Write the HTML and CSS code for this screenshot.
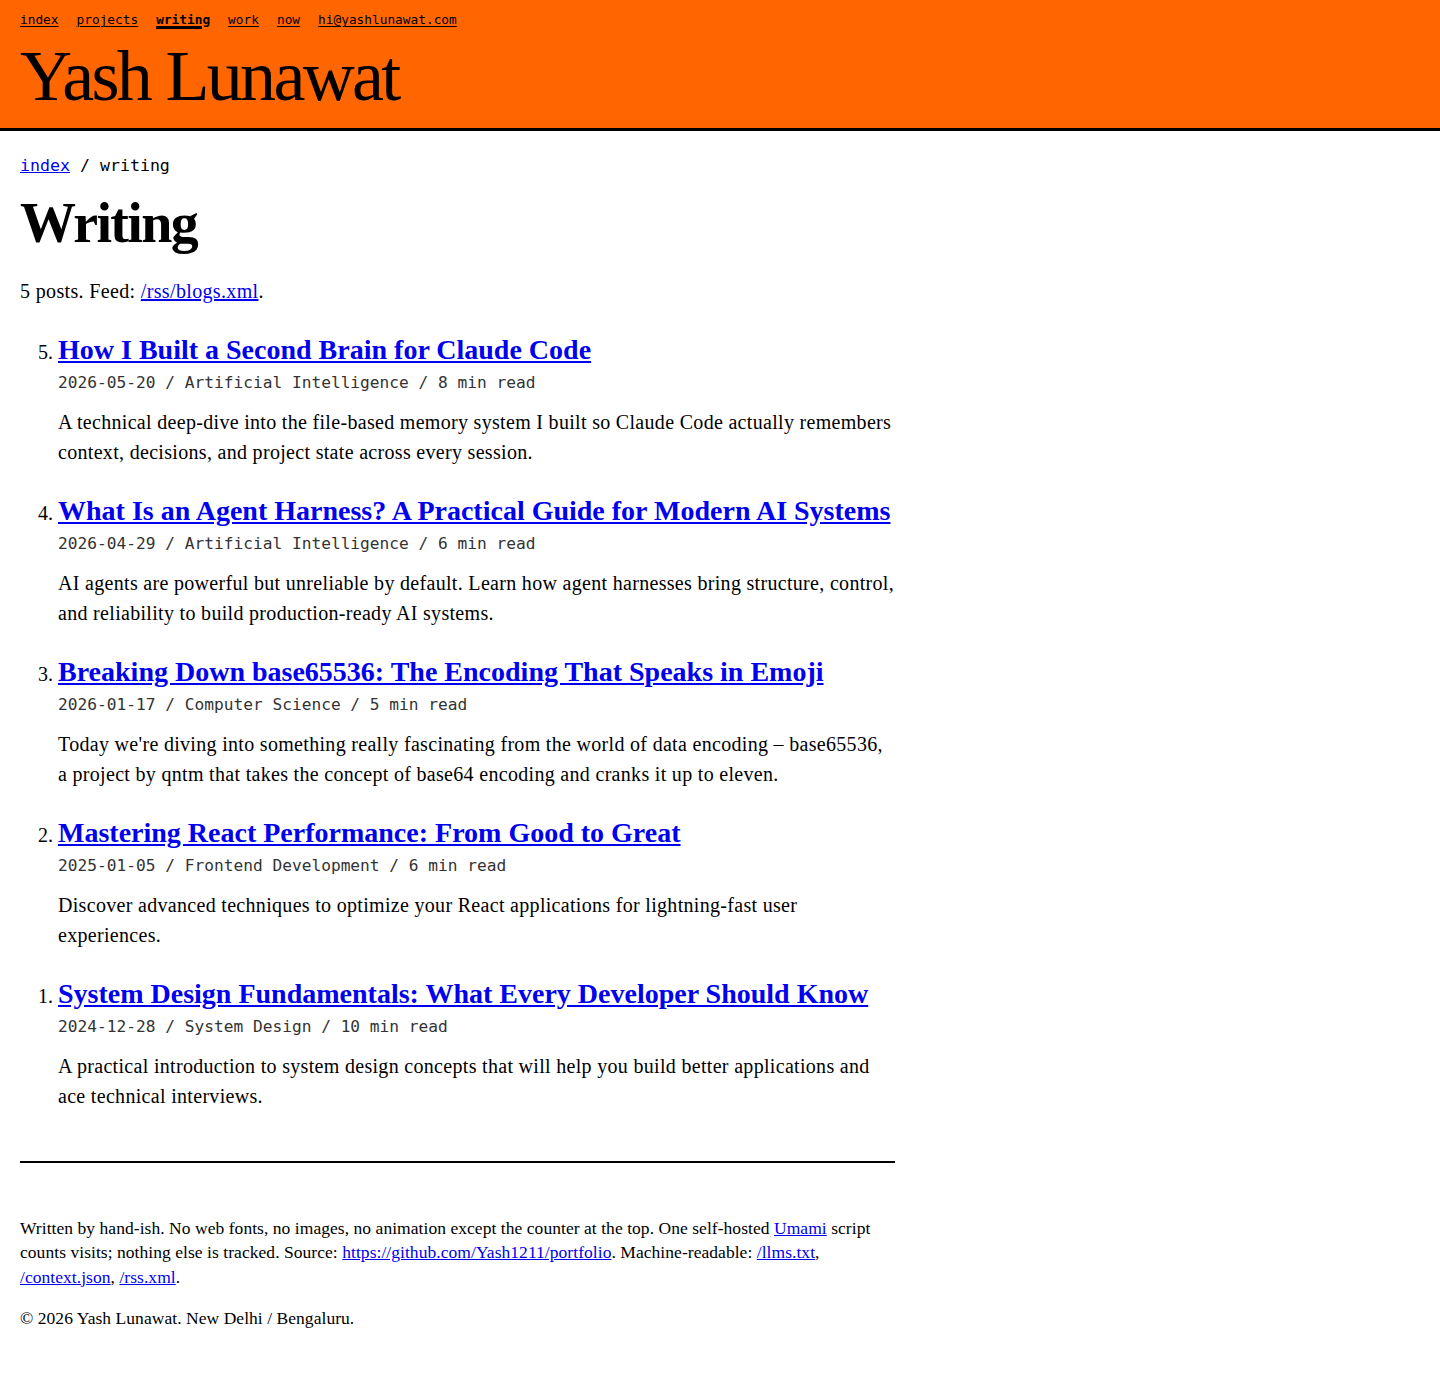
FILE: index.html
```html
<!DOCTYPE html>
<html lang="en">
<head>
<meta charset="utf-8">
<title>Writing — Yash Lunawat</title>
<link rel="stylesheet" href="styles.css">
</head>
<body>
<header class="site-header">
  <nav class="top-nav">
    <a href="#">index</a>
    <a href="#">projects</a>
    <a href="#" class="active">writing</a>
    <a href="#">work</a>
    <a href="#">now</a>
    <a href="#">hi@yashlunawat.com</a>
  </nav>
  <div class="site-name">Yash Lunawat</div>
</header>
<main class="content">
  <div class="crumbs"><a href="#">index</a> / writing</div>
  <h1 class="page-title">Writing</h1>
  <p class="intro">5 posts. Feed: <a href="#">/rss/blogs.xml</a>.</p>
  <ol class="posts" reversed>
    <li class="post">
      <h2 class="post-title"><a href="#">How I Built a Second Brain for Claude Code</a></h2>
      <div class="post-meta">2026-05-20 / Artificial Intelligence / 8 min read</div>
      <p class="post-desc">A technical deep-dive into the file-based memory system I built so Claude Code actually remembers context, decisions, and project state across every session.</p>
    </li>
    <li class="post">
      <h2 class="post-title"><a href="#">What Is an Agent Harness? A Practical Guide for Modern AI Systems</a></h2>
      <div class="post-meta">2026-04-29 / Artificial Intelligence / 6 min read</div>
      <p class="post-desc">AI agents are powerful but unreliable by default. Learn how agent harnesses bring structure, control, and reliability to build production-ready AI systems.</p>
    </li>
    <li class="post">
      <h2 class="post-title"><a href="#">Breaking Down base65536: The Encoding That Speaks in Emoji</a></h2>
      <div class="post-meta">2026-01-17 / Computer Science / 5 min read</div>
      <p class="post-desc">Today we're diving into something really fascinating from the world of data encoding – base65536, a project by qntm that takes the concept of base64 encoding and cranks it up to eleven.</p>
    </li>
    <li class="post">
      <h2 class="post-title"><a href="#">Mastering React Performance: From Good to Great</a></h2>
      <div class="post-meta">2025-01-05 / Frontend Development / 6 min read</div>
      <p class="post-desc">Discover advanced techniques to optimize your React applications for lightning-fast user experiences.</p>
    </li>
    <li class="post">
      <h2 class="post-title"><a href="#">System Design Fundamentals: What Every Developer Should Know</a></h2>
      <div class="post-meta">2024-12-28 / System Design / 10 min read</div>
      <p class="post-desc">A practical introduction to system design concepts that will help you build better applications and ace technical interviews.</p>
    </li>
  </ol>
  <footer class="site-footer">
    <p>Written by hand-ish. No web fonts, no images, no animation except the counter at the top. One self-hosted <a href="#">Umami</a> script counts visits; nothing else is tracked. Source: <a href="#">https://github.com/Yash1211/portfolio</a>. Machine-readable: <a href="#">/llms.txt</a>, <a href="#">/context.json</a>, <a href="#">/rss.xml</a>.</p>
    <p>© 2026 Yash Lunawat. New Delhi / Bengaluru.</p>
  </footer>
</main>
</body>
</html>
```
FILE: styles.css
```css
html, body {
  margin: 0;
  padding: 0;
  background: #fff;
}
body {
  font-family: "Liberation Serif", "Times New Roman", Times, serif;
  font-size: 20px;
  line-height: 1.5;
  color: #000;
}
a {
  color: #0000ee;
}
.site-header {
  background: #ff6600;
  border-bottom: 3px solid #000;
  padding: 10px 20px 16px;
}
.top-nav {
  display: flex;
  gap: 18px;
  font-family: "DejaVu Sans Mono", "Liberation Mono", monospace;
  font-size: 12.8px;
  line-height: 19px;
}
.top-nav a {
  color: #000;
  text-decoration: underline;
  text-decoration-thickness: 1px;
  text-underline-offset: 2px;
}
.top-nav a.active {
  font-weight: bold;
  text-decoration-thickness: 3px;
}
.site-name {
  margin-top: 11px;
  font-size: 72px;
  line-height: 72px;
  letter-spacing: -0.037em;
  color: #000;
}
.content {
  max-width: 875px;
  padding: 23px 20px 40px;
}
.crumbs {
  font-family: "DejaVu Sans Mono", "Liberation Mono", monospace;
  font-size: 16.6px;
  line-height: 24px;
}
.page-title {
  margin: 15px 0 0;
  font-size: 56px;
  line-height: 1.1;
  letter-spacing: -0.03em;
  font-weight: bold;
}
.intro {
  margin: 21px 0 0;
  letter-spacing: 0.35px;
}
.posts {
  margin: 26px 0 0;
  padding-left: 38px;
}
.post {
  margin-bottom: 26px;
}
.post-title {
  margin: 0;
  font-size: 28px;
  line-height: 35px;
  font-weight: bold;
}
.post-meta {
  margin-top: 4px;
  font-family: "DejaVu Sans Mono", "Liberation Mono", monospace;
  font-size: 16.2px;
  line-height: 24px;
  color: #333;
}
.post-desc {
  margin: 12px 0 0;
  letter-spacing: 0.31px;
}
.site-footer {
  margin-top: 50px;
  border-top: 2px solid #000;
  padding-top: 53px;
  font-size: 17.5px;
  line-height: 1.4;
  letter-spacing: 0.05px;
}
.site-footer p {
  margin: 0 0 17px;
}
```
